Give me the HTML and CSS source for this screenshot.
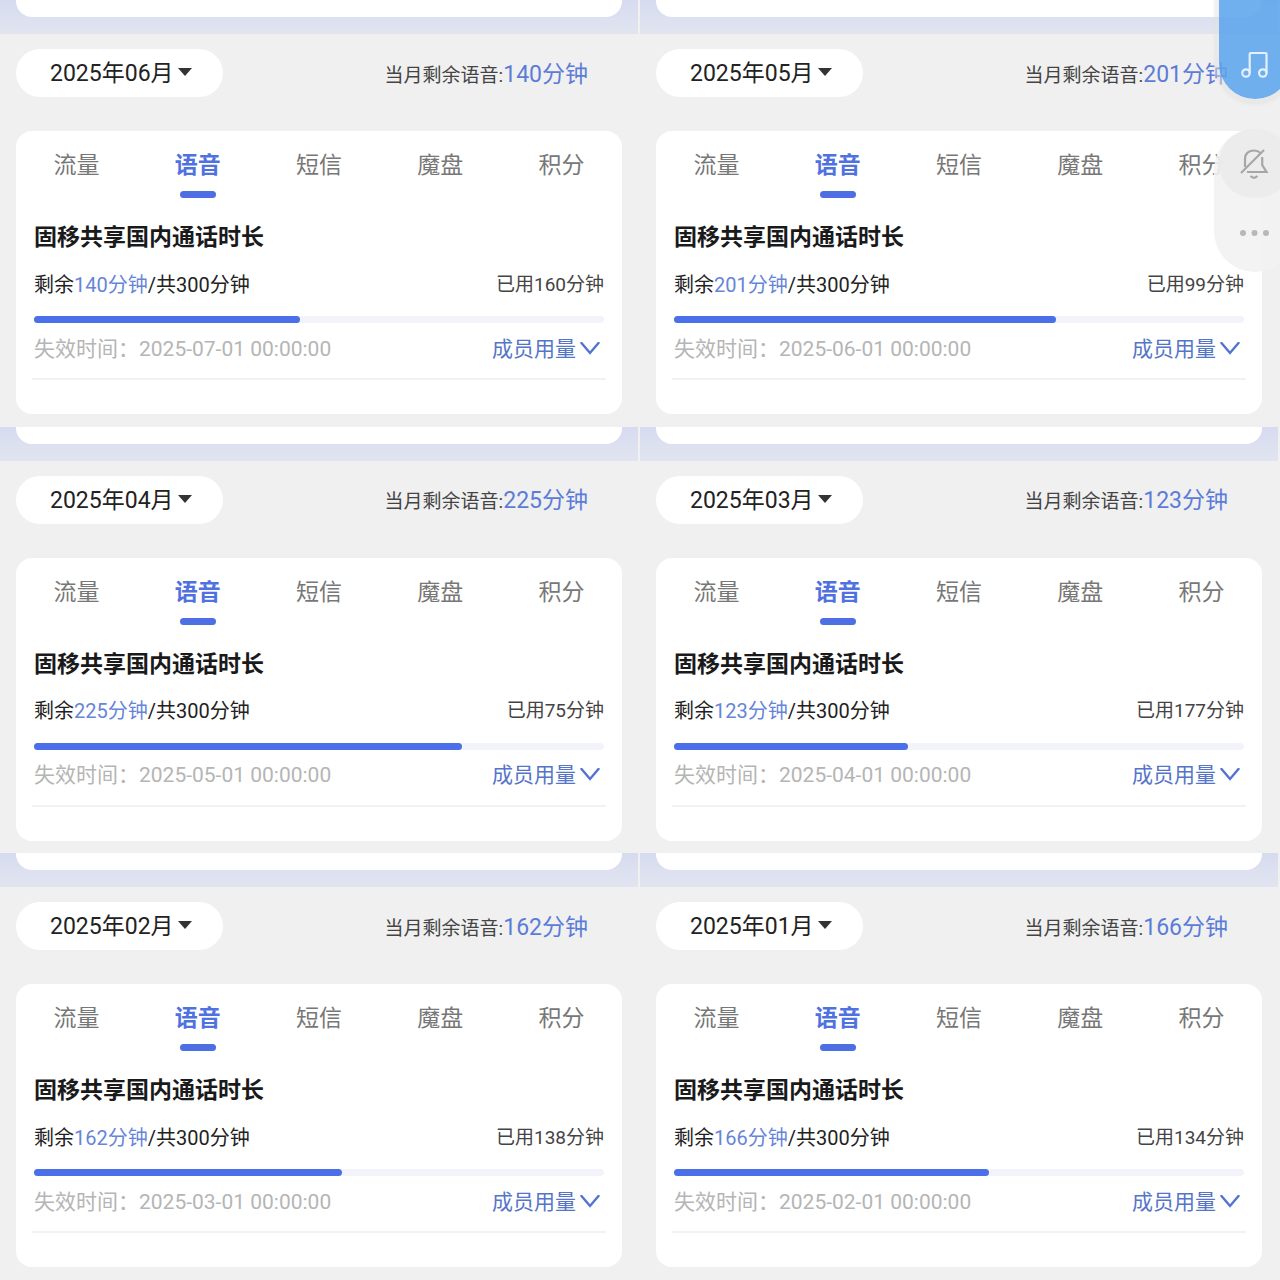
FILE: index.html
```html
<!DOCTYPE html>
<html lang="zh-CN">
<head>
    <meta charset="UTF-8">
    <meta name="viewport" content="width=device-width, initial-scale=1.0">
    <title>语音用量</title>
    <link rel="stylesheet" href="styles.css">
</head>
<body>

<!-- 各月份面板 -->
<main class="months" id="months"></main>

<!-- 悬浮工具栏 -->
<div class="float-tools">
    <button class="float-music" aria-label="音乐">
        <svg width="28" height="28" viewBox="0 0 28 28" fill="none" stroke="#e4f1fd" stroke-width="2.2" stroke-linejoin="round">
            <path d="M8.700 22V3Q8.700 2 9.700 2H24.500Q25.500 2 25.500 3V22"/>
            <circle cx="5" cy="22" r="3.700"/>
            <circle cx="21.800" cy="22" r="3.700"/>
        </svg>
    </button>
    <div class="float-more">
        <button class="float-btn bell" aria-label="静音">
            <svg width="30" height="32" viewBox="0 0 30 32" fill="none" stroke="#a6a6a6" stroke-width="2.2">
                <path d="M5 19V11C5 5.500 9 2.500 14 2.500C17 2.500 19 3.500 20.500 5"/>
                <path d="M22.200 9V17L26.500 24H7"/>
                <path d="M1 25L24 2"/>
                <path d="M10.500 28Q14 31.500 17.500 28"/>
            </svg>
        </button>
        <button class="float-btn dots" aria-label="更多">
            <svg width="30" height="8" viewBox="0 0 30 8" fill="#b8b8b8">
                <circle cx="3" cy="4" r="3"/>
                <circle cx="14.500" cy="4" r="3"/>
                <circle cx="26" cy="4" r="3"/>
            </svg>
        </button>
    </div>
</div>

<script>
    const total = 300;
    const tabs = ['流量', '语音', '短信', '魔盘', '积分'];
    const months = [
        { name: '2025年06月', left: 140, expiry: '2025-07-01' },
        { name: '2025年05月', left: 201, expiry: '2025-06-01' },
        { name: '2025年04月', left: 225, expiry: '2025-05-01' },
        { name: '2025年03月', left: 123, expiry: '2025-04-01' },
        { name: '2025年02月', left: 162, expiry: '2025-03-01' },
        { name: '2025年01月', left: 166, expiry: '2025-02-01' }
    ];

    // 生成每个月的面板
    document.getElementById('months').innerHTML = months.map(m => `
        <section class="panel">
            <div class="band"><div class="band-card"></div></div>
            <div class="month-row">
                <div class="month-picker">
                    <select aria-label="月份"><option>${m.name}</option></select>
                </div>
                <div class="summary">当月剩余语音:<span>${m.left}分钟</span></div>
            </div>
            <div class="card">
                <nav class="tabs">
                    ${tabs.map(t => `<button class="tab${t === '语音' ? ' active' : ''}">${t}</button>`).join('')}
                </nav>
                <div class="plan">
                    <h2>固移共享国内通话时长</h2>
                    <div class="row usage">
                        <div>剩余<span class="left">${m.left}分钟</span>/共${total}分钟</div>
                        <div class="used">已用${total - m.left}分钟</div>
                    </div>
                    <div class="bar"><div class="bar-fill" style="width: ${m.left / total * 100}%"></div></div>
                    <div class="row expiry">
                        <div>失效时间：${m.expiry} 00:00:00</div>
                        <button class="members">成员用量
                            <svg width="20" height="14" viewBox="0 0 20 14" fill="none" stroke="#5274cf" stroke-width="2.4" stroke-linecap="round">
                                <path d="M1.500 1L10 11L18.500 1"/>
                            </svg>
                        </button>
                    </div>
                </div>
            </div>
        </section>
    `).join('');
</script>

</body>
</html>
```
FILE: styles.css
```css
* {
    box-sizing: border-box;
}

body {
    margin: 0;
    background-color: #f0f0f0;
    color: #222;
    font-family: Roboto, "Noto Sans CJK SC", sans-serif;
}

button, select {
    font-family: inherit;
    border: none;
    background: none;
    padding: 0;
    cursor: pointer;
}

.months {
    display: grid;
    grid-template-columns: 1fr 1fr;
    grid-template-rows: repeat(3, 1fr);
    min-height: 100vh;
}

.panel {
    padding-right: 2px;
}

/* 上方卡片的底边 */
.band {
    height: 34px;
    padding: 0 16px;
    background: linear-gradient(#d6dbf0, #dde1f0 60%, #e1e4f0);
}

.band-card {
    height: 17px;
    background-color: #fff;
    border-radius: 0 0 16px 16px;
}

.month-row {
    display: flex;
    align-items: center;
    justify-content: space-between;
    padding: 15px 50px 34px 16px;
}

.month-picker {
    position: relative;
}

.month-picker select {
    display: block;
    appearance: none;
    width: 207px;
    height: 48px;
    padding: 1px 0 0 34px;
    border-radius: 24px;
    background-color: #fff;
    color: #222;
    font-size: 23px;
}

/* 下拉箭头 */
.month-picker::after {
    content: "";
    position: absolute;
    top: 19px;
    right: 31px;
    border: 7px solid transparent;
    border-top: 8px solid #333;
    border-bottom: none;
    pointer-events: none;
}

.summary {
    display: flex;
    align-items: baseline;
    padding-top: 4px;
    font-size: 19px;
    line-height: 32px;
    color: #444;
}

.summary span {
    font-size: 23px;
    color: #5c7cd8;
}

.card {
    height: 283px;
    margin: 0 16px;
    background-color: #fff;
    border-radius: 16px;
}

.tabs {
    display: grid;
    grid-template-columns: repeat(5, 1fr);
}

.tab {
    display: flex;
    flex-direction: column;
    align-items: center;
    height: 68px;
    padding-top: 18px;
    font-size: 23px;
    line-height: 34px;
    color: #777;
}

.tab.active {
    color: #4f72e0;
    font-weight: bold;
}

.tab.active::after {
    content: "";
    width: 36px;
    height: 7px;
    margin-top: 8px;
    border-radius: 4px;
    background-color: #4d6fe3;
}

.plan {
    margin: 0 16px;
    padding: 20px 2px 0;
    border-bottom: 2px solid #f2f2f4;
}

.plan h2 {
    margin: 0;
    font-size: 23px;
    line-height: 38px;
    color: #1a1a1a;
}

.row {
    display: flex;
    align-items: center;
    justify-content: space-between;
}

.usage {
    height: 59px;
    padding-bottom: 4px;
    font-size: 20px;
    line-height: 30px;
}

.usage .left {
    color: #6685d8;
}

.used {
    font-size: 19px;
    color: #444;
}

.bar {
    height: 7px;
    border-radius: 4px;
    background-color: #f3f4fb;
}

.bar-fill {
    height: 7px;
    border-radius: 4px;
    background-color: #4b6fe8;
}

.expiry {
    height: 55px;
    padding-bottom: 4px;
    font-size: 21px;
    line-height: 30px;
    color: #b5b5b5;
}

.members {
    display: flex;
    align-items: center;
    gap: 4px;
    padding-right: 4px;
    font-size: 21px;
    line-height: 30px;
    color: #5575c8;
}

/* 悬浮按钮，右侧超出屏幕 */
.float-tools {
    position: absolute;
    top: 0;
    right: 0;
    width: 70px;
    height: 280px;
    padding-left: 4px;
    overflow: hidden;
}

.float-music {
    display: block;
    width: 72px;
    height: 99px;
    margin-left: 5px;
    padding: 34px 0 0 22px;
    border-radius: 0 0 36px 36px;
    background-color: rgba(93, 165, 236, 0.88);
    box-shadow: 0 1px 2px 5px rgba(225, 225, 225, 0.5);
    text-align: left;
}

.float-more {
    width: 82px;
    height: 143px;
    margin-top: 30px;
    border-radius: 41px;
    background-color: rgba(242, 242, 242, 0.9);
}

.float-btn {
    display: flex;
    align-items: center;
    width: 82px;
    height: 69px;
    padding-left: 26px;
}

.float-btn.bell {
    width: 72px;
    margin-left: 5px;
    padding-left: 21px;
    border-radius: 36px;
    background-color: rgba(232, 232, 232, 0.6);
}
```
